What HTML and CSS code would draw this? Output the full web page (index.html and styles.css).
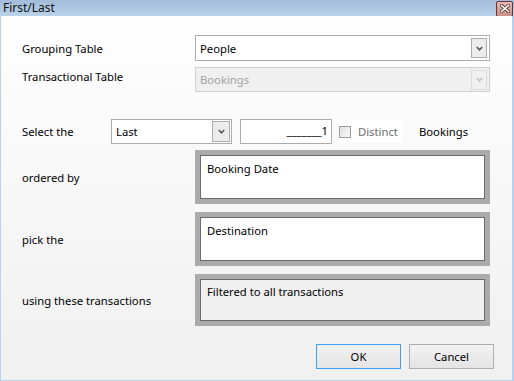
FILE: index.html
```html
<!DOCTYPE html>
<html lang="en">
<head>
  <meta charset="UTF-8">
  <title>First/Last</title>
  <link rel="stylesheet" href="styles.css">
</head>
<body>
  <div class="window">
    <div class="titlebar">
      <span class="title">First/Last</span>
      <span class="close">
        <svg width="10" height="9" viewBox="0 0 10 9">
          <path d="M1.5 1.5 L8.5 7.5 M8.5 1.5 L1.5 7.5" stroke="#5a2a2a" stroke-width="3.2" stroke-linecap="square"/>
          <path d="M1.5 1.5 L8.5 7.5 M8.5 1.5 L1.5 7.5" stroke="#ffffff" stroke-width="1.6" stroke-linecap="square"/>
        </svg>
      </span>
    </div>

    <div class="content">
      <div class="row row-first">
        <span class="label label-wide">Grouping Table</span>
        <div class="combo combo-wide">
          <span class="combo-value">People</span>
          <span class="combo-btn">
            <svg width="7" height="5" viewBox="0 0 7 5"><path d="M0.8 1 L3.5 3.8 L6.2 1" fill="none" stroke="#555" stroke-width="1.6"/></svg>
          </span>
        </div>
      </div>

      <div class="row row-second">
        <span class="label label-wide label-raised">Transactional Table</span>
        <div class="combo combo-wide combo-disabled">
          <span class="combo-value">Bookings</span>
          <span class="combo-btn">
            <svg width="7" height="5" viewBox="0 0 7 5"><path d="M0.8 1 L3.5 3.8 L6.2 1" fill="none" stroke="#c4c4c4" stroke-width="1.6"/></svg>
          </span>
        </div>
      </div>

      <div class="row row-select">
        <span class="label label-short">Select the</span>
        <div class="combo combo-small">
          <span class="combo-value">Last</span>
          <span class="combo-btn">
            <svg width="7" height="5" viewBox="0 0 7 5"><path d="M0.8 1 L3.5 3.8 L6.2 1" fill="none" stroke="#555" stroke-width="1.6"/></svg>
          </span>
        </div>
        <div class="number-box">_______1</div>
        <div class="distinct">
          <span class="checkbox"></span>
          <span class="distinct-text">Distinct</span>
        </div>
        <span class="table-name">Bookings</span>
      </div>

      <div class="row row-box">
        <span class="label label-wide">ordered by</span>
        <div class="field-box">
          <div class="field-inner">Booking Date</div>
        </div>
      </div>

      <div class="row row-box">
        <span class="label label-wide">pick the</span>
        <div class="field-box">
          <div class="field-inner">Destination</div>
        </div>
      </div>

      <div class="row row-box">
        <span class="label label-wide">using these transactions</span>
        <div class="field-box field-box-grey">
          <div class="field-inner">Filtered to all transactions</div>
        </div>
      </div>

      <div class="buttons">
        <button class="btn btn-default">OK</button>
        <button class="btn">Cancel</button>
      </div>
    </div>
  </div>
</body>
</html>
```

FILE: styles.css
```css
html, body {
  margin: 0;
  padding: 0;
}
body {
  font-family: "Noto Sans", "Open Sans", sans-serif;
  font-size: 11.25px;
  color: #000;
  width: 514px;
  height: 381px;
  overflow: hidden;
}
.window {
  height: 381px;
  display: flex;
  flex-direction: column;
  background: #b9d1ea;
}
.titlebar {
  height: 16px;
  display: flex;
  align-items: center;
  justify-content: space-between;
  background: linear-gradient(#a2bcd9, #bad2ea);
}
.title {
  padding-left: 3px;
  font-size: 12px;
  line-height: 16px;
  color: #111;
}
.close {
  width: 15px;
  height: 14px;
  margin: 1px 1px 0 0;
  border: 1px solid #6e3434;
  border-radius: 2px;
  background: linear-gradient(#e2b9b5, #c98f8a);
  display: flex;
  align-items: center;
  justify-content: center;
}
.content {
  flex: 1;
  margin: 0 2px 1px 1px;
  padding: 19px 22px 0 21px;
  background: linear-gradient(#fefefe, #f0f0f0);
}
.row {
  display: flex;
  align-items: center;
}
.row-second {
  margin-top: 6px;
}
.row-select {
  margin-top: 27px;
}
.row-box {
  margin-top: 8px;
}
.row-select + .row-box {
  margin-top: 6px;
}
.label-wide {
  width: 173px;
  flex: none;
}
.label-raised {
  margin-bottom: 6px;
}
.label-short {
  width: 89px;
  flex: none;
}
.combo {
  box-sizing: border-box;
  border: 1px solid #acacac;
  background: #fff;
  display: flex;
  align-items: center;
  justify-content: space-between;
  padding-left: 4px;
}
.combo-wide {
  width: 295px;
  height: 26px;
  padding-right: 2px;
}
.row-second .combo-wide {
  height: 25px;
}
.combo-disabled {
  background: #f0f0f0;
  border-color: #cfcfcf;
  color: #a2a2a2;
}
.combo-btn {
  box-sizing: border-box;
  width: 16px;
  height: 20px;
  border: 1px solid #acacac;
  background: #ececec;
  display: flex;
  align-items: center;
  justify-content: center;
}
.combo-disabled .combo-btn {
  border-color: #dadada;
  background: #f0f0f0;
}
.combo-small {
  width: 121px;
  height: 25px;
  padding-right: 1px;
}
.combo-small .combo-btn {
  width: 18px;
  height: 21px;
}
.number-box {
  box-sizing: border-box;
  width: 92px;
  height: 25px;
  margin-left: 8px;
  border: 1px solid #acacac;
  background: #fff;
  text-align: right;
  padding-right: 3px;
  line-height: 21px;
}
.distinct {
  width: 64px;
  height: 23px;
  margin-left: 7px;
  background: #fff;
  display: flex;
  align-items: center;
}
.checkbox {
  box-sizing: border-box;
  width: 12px;
  height: 12px;
  border: 1px solid #9d9d9d;
  background: linear-gradient(135deg, #e2e2e2, #f7f7f7);
}
.distinct-text {
  margin-left: 7px;
  color: #6d6d6d;
}
.table-name {
  margin-left: 16px;
}
.field-box {
  box-sizing: border-box;
  width: 295px;
  height: 54px;
  border: 5px solid #ababab;
  display: flex;
}
.field-inner {
  flex: 1;
  border: 1px solid #6b6b6b;
  background: #fff;
  padding: 5px 6px;
}
.field-box-grey {
  height: 52px;
}
.field-box-grey .field-inner {
  background: #f0f0f0;
  padding-top: 4px;
}
.buttons {
  display: flex;
  justify-content: flex-end;
  gap: 8px;
  margin-top: 18px;
  margin-right: -4px;
}
.btn {
  width: 85px;
  height: 25px;
  font-family: inherit;
  font-size: 11.25px;
  color: #000;
  border: 1px solid #adadad;
  background: linear-gradient(#f2f2f2, #e4e4e4);
  padding: 0;
}
.btn-default {
  border-color: #3c9ff5;
}
```
